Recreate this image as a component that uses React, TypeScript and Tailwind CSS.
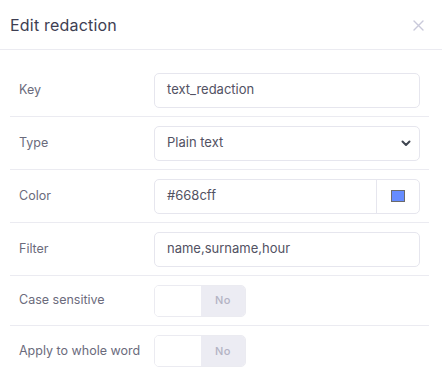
import { ReactNode } from 'react'

// Row wrapper: label on the left, control on the right
function Row({ label, children, tall = true, last = false }: { label: string; children: ReactNode; tall?: boolean; last?: boolean }) {
  return (
    <div
      className={`flex items-center pl-[9px] ${tall ? 'h-[53px]' : 'h-[50px]'} ${last ? '' : 'border-b border-[#ebebf1]'}`}
    >
      <div className="w-[135px] text-[12.5px] text-[#6b6b7c]">{label}</div>
      {children}
    </div>
  )
}

function TextBox({ value }: { value: string }) {
  return (
    <div className="flex h-[35px] w-[266px] items-center rounded-[5px] border border-[#e6e6ee] px-[12px] text-[13px] text-[#525263]">
      {value}
    </div>
  )
}

function Toggle() {
  return (
    <div className="flex h-[32px] w-[92px] overflow-hidden rounded-[5px] border border-[#ebebf1]">
      <div className="w-[46px] bg-white" />
      <div className="flex flex-1 items-center justify-center bg-[#ececf3] text-[11px] font-medium tracking-[0.5px] text-[#b3b3c4]">
        No
      </div>
    </div>
  )
}

export default function App() {
  return (
    <div className="h-[386px] w-[442px] bg-white font-['Inter',sans-serif]">
      {/* Header */}
      <div className="flex h-[50px] items-center justify-between border-b border-[#ebebf1] pl-[10px] pr-[18px]">
        <h3 className="text-[16px] tracking-[0.2px] text-[#3e3e52]">Edit redaction</h3>
        <svg width="11" height="11" viewBox="0 0 11 11" className="mt-[1px]">
          <path d="M1 1L10 10M10 1L1 10" stroke="#c9c9da" strokeWidth="1.4" strokeLinecap="round" />
        </svg>
      </div>

      {/* Body */}
      <div className="pl-[10px] pr-[13px] pt-[14px]">
        <Row label="Key">
          <TextBox value="text_redaction" />
        </Row>
        <Row label="Type">
          <div className="flex h-[35px] w-[266px] items-center justify-between rounded-[5px] border border-[#e6e6ee] pl-[12px] pr-[8px] text-[13px] text-[#525263]">
            <span>Plain text</span>
            <svg width="10" height="7" viewBox="0 0 10 7">
              <path d="M1.5 1.5L5 5L8.5 1.5" fill="none" stroke="#3f4550" strokeWidth="2" strokeLinecap="round" strokeLinejoin="round" />
            </svg>
          </div>
        </Row>
        <Row label="Color">
          <div className="flex h-[35px] w-[266px] items-center rounded-[5px] border border-[#e6e6ee] text-[13px] text-[#525263]">
            <span className="flex-1 pl-[12px]">#668cff</span>
            <div className="flex h-full w-[43px] items-center justify-center border-l border-[#e6e6ee]">
              <div className="h-[12px] w-[14px] border border-[#6b6b6b] bg-[#668cff]" />
            </div>
          </div>
        </Row>
        <Row label="Filter">
          <TextBox value="name,surname,hour" />
        </Row>
        <Row label="Case sensitive" tall={false}>
          <Toggle />
        </Row>
        <Row label="Apply to whole word" tall={false} last>
          <Toggle />
        </Row>
      </div>
    </div>
  )
}
